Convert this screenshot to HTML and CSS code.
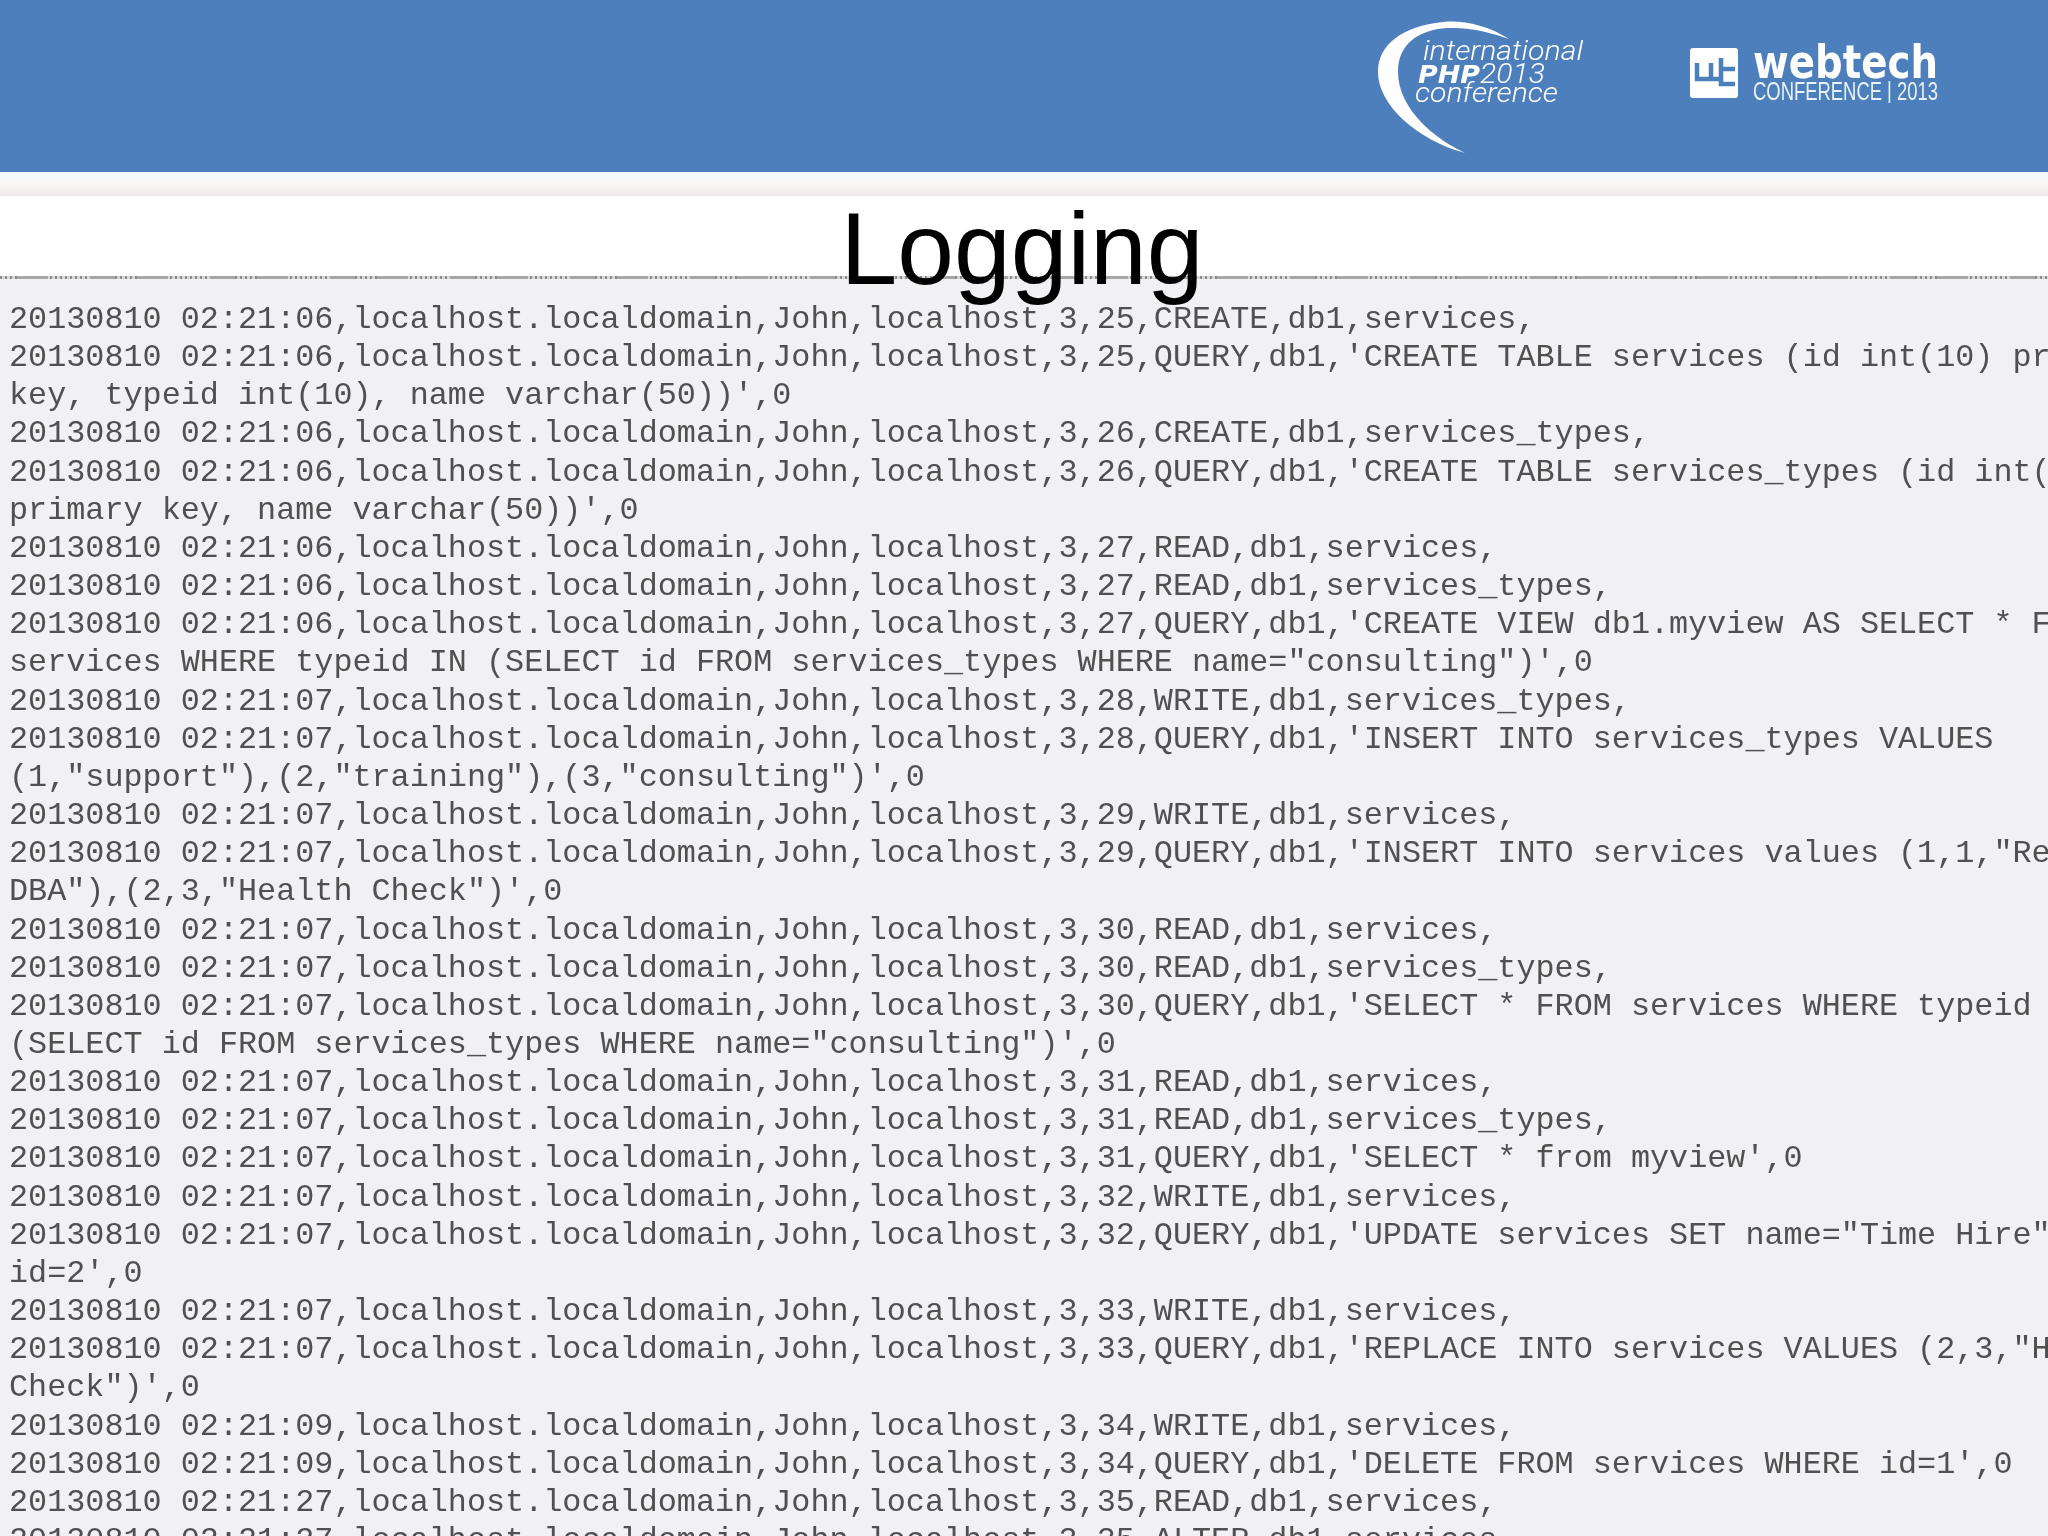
FILE: index.html
```html
<!DOCTYPE html>
<html lang="en">
<head>
    <meta charset="UTF-8">
    <title>Logging</title>
    <link rel="stylesheet" href="styles.css">
</head>
<body>

    <!-- Conference banner -->
    <div class="banner">
        <svg class="logo-php" width="230" height="145" viewBox="0 0 230 145">
            <path class="logo-fill" d="M132 24C110 10 85 5 66 7C25 11 1 30 1 57C1 90 40 125 88 138C60 125 21 95 21 57C21 30 40 15 70 13C95 12 115 18 132 24Z"/>
            <text class="php-line" x="46" y="45" textLength="160" lengthAdjust="spacingAndGlyphs">international</text>
            <text class="php-line" x="41" y="68" textLength="127" lengthAdjust="spacingAndGlyphs"><tspan class="php-bold">PHP</tspan>2013</text>
            <text class="php-line" x="38" y="87" textLength="143" lengthAdjust="spacingAndGlyphs">conference</text>
        </svg>
        <svg class="logo-webtech" width="252" height="62" viewBox="0 0 252 62">
            <rect class="logo-fill" x="2" y="7" width="48" height="50" rx="3"/>
            <path class="logo-cut" d="M9 22V38H33M23 22V38M33 17V43H47M33 28H47"/>
            <text class="webtech-name" x="65" y="37" textLength="185" lengthAdjust="spacingAndGlyphs">webtech</text>
            <text class="webtech-sub" x="65" y="59" textLength="185" lengthAdjust="spacingAndGlyphs">CONFERENCE | 2013</text>
        </svg>
    </div>
    <div class="strip"></div>

    <!-- Slide title -->
    <div class="title"><h1>Logging</h1></div>
    <div class="rule"></div>

    <!-- Audit log -->
    <pre class="log">20130810 02:21:06,localhost.localdomain,John,localhost,3,25,CREATE,db1,services,
20130810 02:21:06,localhost.localdomain,John,localhost,3,25,QUERY,db1,'CREATE TABLE services (id int(10) primary
key, typeid int(10), name varchar(50))',0
20130810 02:21:06,localhost.localdomain,John,localhost,3,26,CREATE,db1,services_types,
20130810 02:21:06,localhost.localdomain,John,localhost,3,26,QUERY,db1,'CREATE TABLE services_types (id int(10)
primary key, name varchar(50))',0
20130810 02:21:06,localhost.localdomain,John,localhost,3,27,READ,db1,services,
20130810 02:21:06,localhost.localdomain,John,localhost,3,27,READ,db1,services_types,
20130810 02:21:06,localhost.localdomain,John,localhost,3,27,QUERY,db1,'CREATE VIEW db1.myview AS SELECT * FROM
services WHERE typeid IN (SELECT id FROM services_types WHERE name="consulting")',0
20130810 02:21:07,localhost.localdomain,John,localhost,3,28,WRITE,db1,services_types,
20130810 02:21:07,localhost.localdomain,John,localhost,3,28,QUERY,db1,'INSERT INTO services_types VALUES
(1,"support"),(2,"training"),(3,"consulting")',0
20130810 02:21:07,localhost.localdomain,John,localhost,3,29,WRITE,db1,services,
20130810 02:21:07,localhost.localdomain,John,localhost,3,29,QUERY,db1,'INSERT INTO services values (1,1,"Remote
DBA"),(2,3,"Health Check")',0
20130810 02:21:07,localhost.localdomain,John,localhost,3,30,READ,db1,services,
20130810 02:21:07,localhost.localdomain,John,localhost,3,30,READ,db1,services_types,
20130810 02:21:07,localhost.localdomain,John,localhost,3,30,QUERY,db1,'SELECT * FROM services WHERE typeid IN
(SELECT id FROM services_types WHERE name="consulting")',0
20130810 02:21:07,localhost.localdomain,John,localhost,3,31,READ,db1,services,
20130810 02:21:07,localhost.localdomain,John,localhost,3,31,READ,db1,services_types,
20130810 02:21:07,localhost.localdomain,John,localhost,3,31,QUERY,db1,'SELECT * from myview',0
20130810 02:21:07,localhost.localdomain,John,localhost,3,32,WRITE,db1,services,
20130810 02:21:07,localhost.localdomain,John,localhost,3,32,QUERY,db1,'UPDATE services SET name="Time Hire" WHERE
id=2',0
20130810 02:21:07,localhost.localdomain,John,localhost,3,33,WRITE,db1,services,
20130810 02:21:07,localhost.localdomain,John,localhost,3,33,QUERY,db1,'REPLACE INTO services VALUES (2,3,"Health
Check")',0
20130810 02:21:09,localhost.localdomain,John,localhost,3,34,WRITE,db1,services,
20130810 02:21:09,localhost.localdomain,John,localhost,3,34,QUERY,db1,'DELETE FROM services WHERE id=1',0
20130810 02:21:27,localhost.localdomain,John,localhost,3,35,READ,db1,services,
20130810 02:21:27,localhost.localdomain,John,localhost,3,35,ALTER,db1,services,</pre>

</body>
</html>
```

FILE: styles.css
```css
/* Slide layout */
html, body { height: 100%; }
body { margin: 0; height: 1536px; overflow: hidden; display: flex; flex-direction: column; background: #f1f0f3; font-family: "Liberation Sans", Arial, sans-serif; }

.banner { height: 172px; flex: none; display: flex; align-items: flex-start; justify-content: flex-end; padding-right: 108px; box-sizing: border-box; background: #4d7fbd; }
.logo-php { margin-top: 15px; margin-right: 81px; filter: blur(0.4px); }
.logo-webtech { margin-top: 41px; filter: blur(0.4px); }
.logo-fill { fill: #fff; }
.logo-cut { fill: none; stroke: #4d7fbd; stroke-width: 4.5; }
.php-line { fill: #fff; font-family: Roboto, "Liberation Sans", sans-serif; font-size: 28px; font-style: italic; font-weight: 300; }
.php-bold { font-family: "DejaVu Sans", sans-serif; font-size: 25px; font-weight: 700; }
.webtech-name { fill: #fff; font-family: "DejaVu Sans", sans-serif; font-size: 47px; font-weight: 700; }
.webtech-sub { fill: #e8f2f8; font-family: "Liberation Sans", Arial, sans-serif; font-size: 25px; }

.strip { height: 24px; flex: none; background: linear-gradient(#f6fbfd, #faf9f7 50%, #eeeaea); }

.title { height: 80px; flex: none; padding-right: 4px; background: #fff; text-align: center; }
.title h1 { position: relative; z-index: 1; margin: 0; font-size: 102px; font-weight: 400; line-height: 106px; color: #000; }

/* dotted rule: solid runs laid over a dotted base */
.rule { height: 3px; flex: none; background:
    repeating-linear-gradient(90deg, transparent 0 17px, #a6a6a6 17px 48px, transparent 48px 90px, #a6a6a6 90px 115px, transparent 115px 120px),
    repeating-linear-gradient(90deg, #8c8c8c 0 2px, #d6d6d9 2px 5px); }

.log { flex: 1; margin: 0; padding: 22px 0 0 9px; overflow: hidden; white-space: pre; font-family: "Liberation Mono", "Courier New", monospace; font-size: 31.8px; line-height: 38.15px; color: #505050; filter: blur(0.5px); }
```
